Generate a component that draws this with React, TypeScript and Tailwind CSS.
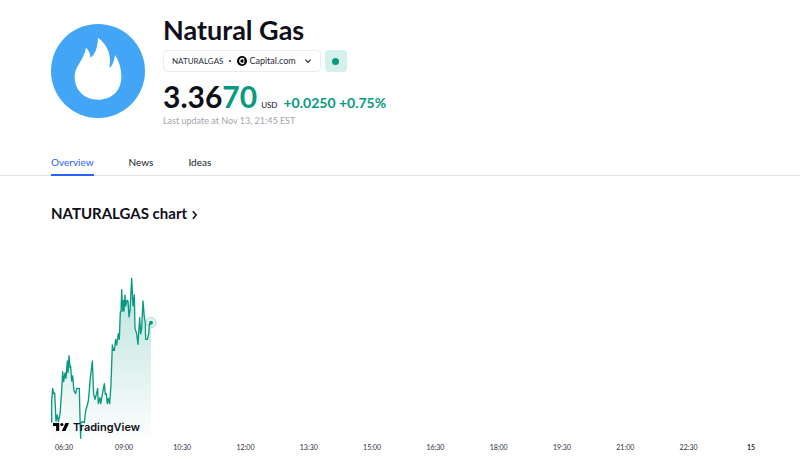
import React from 'react'

const tabs = [
  { label: 'Overview', active: true },
  { label: 'News', active: false },
  { label: 'Ideas', active: false },
]

const hours = [
  '06:30',
  '09:00',
  '10:30',
  '12:00',
  '13:30',
  '15:00',
  '16:30',
  '18:00',
  '19:30',
  '21:00',
  '22:30',
]

const line =
  '20,455 20,390 23,352 26,368 29,366 33,450 37,432 40,452 45,430 50,360 53,302 56,332 60,306 63,322 67,270 69,305 72,254 75,290 77,286 80,330 83,315 87,360 92,368 95,352 103,352 105,440 107,502 108,455 113,452 118,455 122,420 130,390 136,320 142,270 146,370 150,385 154,370 158,352 160,398 165,380 167,398 173,365 178,338 181,370 184,368 187,398 190,382 194,398 198,340 199,310 202,222 205,238 208,238 212,205 215,222 220,188 223,205 226,122 228,122 230,56 233,120 236,88 237,120 240,72 242,105 246,88 249,90 252,138 255,120 260,22 264,105 268,72 270,172 275,188 279,220 284,140 287,188 290,172 294,90 298,138 301,155 302,205 307,205 311,188 313,160 318,155'

const FlameLogo = () => (
  <svg viewBox="0 0 282 282" className="size-[94px] shrink-0" aria-hidden="true">
    <circle cx="141" cy="141" r="141" fill="#42a5f5" />
    <path
      d="M141 41C158 54 177 76 177 108C177 118 176 127 175 132C187 124 190 106 192 93C202 107 211 130 211 158C211 201 181 227 141 227C100 227 71 198 71 159C71 126 97 112 105 71C113 78 119 91 118 101C134 90 140 68 141 41Z"
      fill="#fff"
    />
  </svg>
)

const Header = () => (
  <header className="flex gap-[18px] px-[51px] pt-3">
    <div className="pt-3">
      <FlameLogo />
    </div>
    <div>
      <h1 className="text-[27px] leading-9 font-bold">Natural Gas</h1>
      <div className="mt-0.5 flex gap-1">
        <button
          type="button"
          className="flex h-[22px] items-center rounded-[4px] border border-[#ebedf2] px-2 text-[9px] text-[#2a2e39]"
        >
          <span className="text-[8px]">NATURALGAS</span>
          <span className="mx-1.5 size-0.5 rounded-full bg-[#2a2e39]" />
          <svg viewBox="0 0 20 20" className="mr-0.5 size-2.5" aria-hidden="true">
            <circle cx="10" cy="10" r="10" fill="#000" />
            <path d="M14.5 7A5 5 0 1 0 14.5 13" fill="none" stroke="#fff" strokeWidth="2.6" />
            <path d="M12 10H16" stroke="#fff" strokeWidth="2" />
          </svg>
          Capital.com
          <svg viewBox="0 0 12 12" className="ml-2 size-2" fill="none" aria-hidden="true">
            <path d="M2 4L6 8L10 4" stroke="#2a2e39" strokeWidth="1.8" />
          </svg>
        </button>
        <button
          type="button"
          aria-label="Market open"
          className="flex h-[22px] w-[22px] items-center justify-center rounded-[4px] bg-[#d6f1ec]"
        >
          <span className="size-[7px] rounded-full bg-[#089981]" />
        </button>
      </div>
      <div className="mt-1.5 flex items-baseline">
        <span className="text-[30px] leading-9 font-bold">
          3.36<span className="text-[#089981]">70</span>
        </span>
        <span className="ml-1 text-[8px]">USD</span>
        <span className="ml-1.5 text-[14px] font-bold text-[#089981]">+0.0250 +0.75%</span>
      </div>
      <p className="mt-px text-[9px] leading-3 text-[#a3a6af]">
        Last update at Nov 13, 21:45 EST
      </p>
    </div>
  </header>
)

const Tabs = () => (
  <nav className="mt-[23px] flex gap-[35px] border-b border-[#dbdfe8] px-[51px] text-[10px] leading-4">
    {tabs.map(({ label, active }) => (
      <a
        key={label}
        href={`#${label.toLowerCase()}`}
        className={
          active
            ? '-mb-px border-b-2 border-[#2962ff] py-1 text-[#2962ff]'
            : 'py-1 text-[#131722]'
        }
      >
        {label}
      </a>
    ))}
  </nav>
)

const TradingViewLogo = () => (
  <div className="absolute bottom-1.5 left-0.5 flex items-center gap-1">
    <svg viewBox="0 0 36 18" className="h-2 w-4" aria-hidden="true">
      <path d="M0 0H14V18H7V7H0Z" />
      <circle cx="20" cy="3.5" r="3.5" />
      <path d="M28 0H36L28 18H20Z" />
    </svg>
    <span className="font-['Inter',sans-serif] text-[11px] leading-3 font-semibold">
      TradingView
    </span>
  </div>
)

const Chart = () => (
  <section className="pt-[27px]">
    <h2 className="px-[51px] text-[15px] leading-5 font-bold">
      <a href="#chart" className="flex items-center">
        NATURALGAS chart
        <svg viewBox="0 0 8 12" className="mt-1 ml-1 h-2.5 w-[7px]" fill="none" aria-hidden="true">
          <path d="M2 1.5L6 6L2 10.5" stroke="#131722" strokeWidth="2" />
        </svg>
      </a>
    </h2>
    <div className="relative mt-12 ml-[51px]">
      <svg viewBox="18 0 330 504" className="h-[168px] w-[110px]" role="img" aria-label="Price line">
        <defs>
          <linearGradient id="fade" x1="0" y1="0" x2="0" y2="1">
            <stop offset="0" stopColor="#089981" stopOpacity="0.28" />
            <stop offset="1" stopColor="#089981" stopOpacity="0.01" />
          </linearGradient>
        </defs>
        <polygon points={`20,504 ${line} 318,504`} fill="url(#fade)" />
        <polyline
          points={line}
          fill="none"
          stroke="#089981"
          strokeWidth="4"
          strokeLinejoin="round"
        />
        <circle cx="318" cy="155" r="15" fill="#089981" fillOpacity="0.1" stroke="#7fc8bb" strokeWidth="2" />
        <circle cx="318" cy="155" r="6" fill="#089981" />
      </svg>
      <TradingViewLogo />
    </div>
    <div className="grid grid-cols-[600fr_580fr_632fr_632fr_632fr_632fr_632fr_632fr_632fr_632fr_632fr_570fr] pt-0.5 pl-[55px] text-[7px] leading-3 text-[#2a2e39]">
      {hours.map((hour) => (
        <span key={hour}>{hour}</span>
      ))}
      <span className="pl-1 font-bold">15</span>
    </div>
  </section>
)

const App = () => {
  return (
    <main className="w-full overflow-hidden bg-white font-['Lato','Open_Sans',sans-serif] text-[#0f0f1a]">
      <Header />
      <Tabs />
      <Chart />
    </main>
  )
}

export default App
